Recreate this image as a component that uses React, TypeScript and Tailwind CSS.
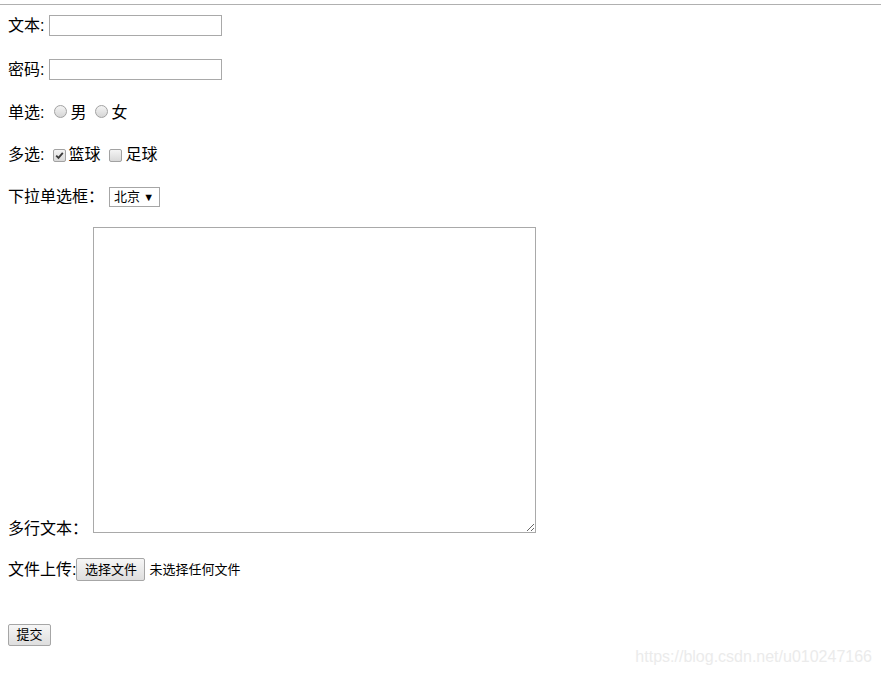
import React from 'react';

const FONT = "font-['Liberation_Sans','Noto_Sans_CJK_SC',sans-serif]";

function Radio() {
  return (
    <span className="inline-block h-[13px] w-[13px] shrink-0 rounded-full border border-[#a2a2a2] bg-gradient-to-b from-[#f4f4f4] to-[#d6d6d6]" />
  );
}

function Check({ checked }: { checked?: boolean }) {
  return (
    <span className="flex h-[13px] w-[13px] shrink-0 items-center justify-center rounded-[2px] border border-[#a2a2a2] bg-gradient-to-b from-[#f4f4f4] to-[#d8d8d8]">
      {checked && (
        <svg width="9" height="9" viewBox="0 0 9 9">
          <path d="M1.2 4.6 L3.5 6.9 L7.8 1.8" fill="none" stroke="#3a3a3a" strokeWidth="1.8" />
        </svg>
      )}
    </span>
  );
}

export default function App() {
  return (
    <div className={`relative h-[676px] w-full overflow-hidden bg-white text-[16px] leading-[20px] text-black ${FONT}`}>
      <div className="mt-[4px] border-t border-[#b0b0b0]" />

      <div className="px-2">
        {/* 文本 */}
        <div className="mt-[10px] flex h-[21px] items-center">
          <span>文本:</span>
          <input type="text" className="ml-[5px] h-[21px] w-[173px] border border-[#a9a9a9] bg-white px-1 text-[13px] outline-none" />
        </div>

        {/* 密码 */}
        <div className="mt-[23px] flex h-[21px] items-center">
          <span>密码:</span>
          <input type="password" className="ml-[5px] h-[21px] w-[173px] border border-[#a9a9a9] bg-white px-1 text-[13px] outline-none" />
        </div>

        {/* 单选 */}
        <div className="mt-[22px] flex h-[22px] items-center">
          <span>单选:</span>
          <span className="ml-[10px]"><Radio /></span>
          <span className="ml-[3px]">男</span>
          <span className="ml-[9px]"><Radio /></span>
          <span className="ml-[3px]">女</span>
        </div>

        {/* 多选 */}
        <div className="mt-[20px] flex h-[22px] items-center">
          <span>多选:</span>
          <span className="ml-[9px]"><Check checked /></span>
          <span className="ml-[2px]">篮球</span>
          <span className="ml-[9px]"><Check /></span>
          <span className="ml-[3px]">足球</span>
        </div>

        {/* 下拉 */}
        <div className="mt-[21px] flex h-[20px] items-center">
          <span>下拉单选框：</span>
          <div className="ml-[5px] flex h-[20px] w-[51px] items-center justify-between border border-[#a6a6a6] bg-white pl-[4px] pr-[5px] text-[13px]">
            <span>北京</span>
            <span className="text-[11px] leading-none">▼</span>
          </div>
        </div>

        {/* 多行文本 */}
        <div className="mt-[20px] flex items-end">
          <span className="mb-[-5px] leading-[18px]">多行文本：</span>
          <textarea className="ml-[5px] h-[306px] w-[443px] border border-[#a9a9a9] bg-white p-1 text-[13px] outline-none" />
        </div>

        {/* 文件上传 */}
        <div className="mt-[25px] flex h-[23px] items-center">
          <span>文件上传:</span>
          <button type="button" className="flex h-[23px] w-[69px] items-center justify-center rounded-[2px] border border-[#a6a6a6] bg-gradient-to-b from-[#f6f6f6] to-[#dedede] text-[13px]">
            选择文件
          </button>
          <span className="ml-[4px] text-[13px]">未选择任何文件</span>
        </div>

        {/* 提交 */}
        <div className="mt-[43px] flex">
          <button type="button" className="flex h-[22px] w-[43px] items-center justify-center rounded-[2px] border border-[#a6a6a6] bg-gradient-to-b from-[#f6f6f6] to-[#dedede] text-[13px]">
            提交
          </button>
        </div>
      </div>

      <div className="absolute right-[9px] top-[647px] font-['Liberation_Sans',sans-serif] text-[16px] leading-[20px] text-[#ebebeb]">
        https://blog.csdn.net/u010247166
      </div>
    </div>
  );
}
